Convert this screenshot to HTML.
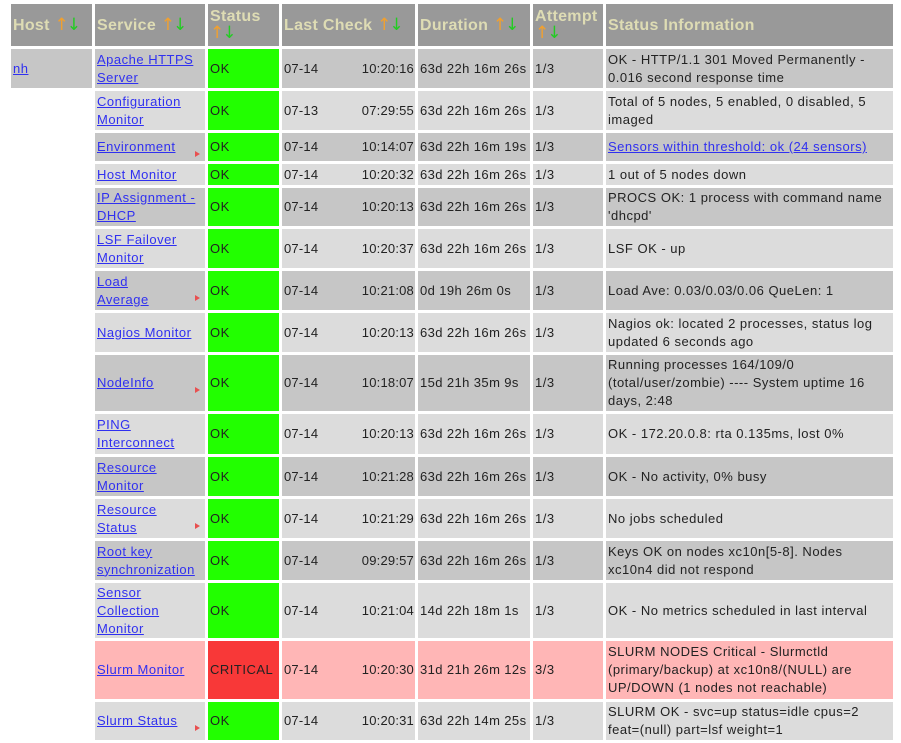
<!DOCTYPE html>
<html><head><meta charset="utf-8"><style>
html,body{margin:0;padding:0;background:#fff;width:901px;height:743px;overflow:hidden;}
table{position:absolute;left:8px;top:1px;border-collapse:separate;border-spacing:3px;table-layout:fixed;font-family:"Liberation Sans",Arial,sans-serif;font-size:13px;color:#222;letter-spacing:0.5px;}
td,th{padding:0 1px 0 2px;vertical-align:middle;line-height:18px;overflow:hidden;}
th{background:#999;color:#dedcb4;font-size:16px;font-weight:bold;text-align:left;height:42px;white-space:nowrap;line-height:17px;letter-spacing:0.3px;}
.u,.d{font-family:"DejaVu Sans",sans-serif;font-size:17px;font-weight:normal;letter-spacing:-2px;}
.u{color:#f0a030;}.d{color:#22cc22;}
a{color:#3030f0;text-decoration:underline;}
.o td{background:#c6c6c6;}.e td{background:#dcdcdc;}
.p td{background:#ffb6b6;}
td.w{background:#fff !important;}
td.ok{background:#22ff00 !important;}
td.cr{background:#f83838 !important;}
td.s{position:relative;}
.f{position:absolute;right:5px;top:calc(50% + 4px);width:0;height:0;border-left:5px solid #e85050;border-top:3px solid transparent;border-bottom:3px solid transparent;}
.lc{white-space:nowrap;letter-spacing:0.2px;}
.lc span{float:right;}
.n{white-space:nowrap;letter-spacing:0.4px;}
</style></head><body>
<table>
<colgroup><col style="width:81px"><col style="width:110px"><col style="width:71px"><col style="width:133px"><col style="width:112px"><col style="width:70px"><col style="width:287px"></colgroup>
<tr><th>Host <span class="u">↑</span><span class="d">↓</span></th><th>Service <span class="u">↑</span><span class="d">↓</span></th><th>Status<br><span class="u">↑</span><span class="d">↓</span></th><th>Last Check <span class="u">↑</span><span class="d">↓</span></th><th>Duration <span class="u">↑</span><span class="d">↓</span></th><th>Attempt<br><span class="u">↑</span><span class="d">↓</span></th><th>Status Information</th></tr>
<tr class="o" style="height:39px"><td><a>nh</a></td><td class="s"><a>Apache HTTPS Server</a></td><td class="ok">OK</td><td class="lc">07-14<span>10:20:16</span></td><td class="n">63d 22h 16m 26s</td><td>1/3</td><td>OK - HTTP/1.1 301 Moved Permanently - 0.016 second response time</td></tr>
<tr class="e" style="height:39px"><td class="w"></td><td class="s"><a>Configuration Monitor</a></td><td class="ok">OK</td><td class="lc">07-13<span>07:29:55</span></td><td class="n">63d 22h 16m 26s</td><td>1/3</td><td>Total of 5 nodes, 5 enabled, 0 disabled, 5 imaged</td></tr>
<tr class="o" style="height:28px"><td class="w"></td><td class="s"><a>Environment</a><i class="f"></i></td><td class="ok">OK</td><td class="lc">07-14<span>10:14:07</span></td><td class="n">63d 22h 16m 19s</td><td>1/3</td><td><a>Sensors within threshold: ok (24 sensors)</a></td></tr>
<tr class="e" style="height:21px"><td class="w"></td><td class="s"><a>Host Monitor</a></td><td class="ok">OK</td><td class="lc">07-14<span>10:20:32</span></td><td class="n">63d 22h 16m 26s</td><td>1/3</td><td>1 out of 5 nodes down</td></tr>
<tr class="o" style="height:38px"><td class="w"></td><td class="s"><a>IP Assignment - DHCP</a></td><td class="ok">OK</td><td class="lc">07-14<span>10:20:13</span></td><td class="n">63d 22h 16m 26s</td><td>1/3</td><td>PROCS OK: 1 process with command name 'dhcpd'</td></tr>
<tr class="e" style="height:39px"><td class="w"></td><td class="s"><a>LSF Failover Monitor</a></td><td class="ok">OK</td><td class="lc">07-14<span>10:20:37</span></td><td class="n">63d 22h 16m 26s</td><td>1/3</td><td>LSF OK - up</td></tr>
<tr class="o" style="height:39px"><td class="w"></td><td class="s"><a>Load<br>Average</a><i class="f"></i></td><td class="ok">OK</td><td class="lc">07-14<span>10:21:08</span></td><td class="n">0d 19h 26m 0s</td><td>1/3</td><td>Load Ave: 0.03/0.03/0.06 QueLen: 1</td></tr>
<tr class="e" style="height:39px"><td class="w"></td><td class="s"><a>Nagios Monitor</a></td><td class="ok">OK</td><td class="lc">07-14<span>10:20:13</span></td><td class="n">63d 22h 16m 26s</td><td>1/3</td><td>Nagios ok: located 2 processes, status log updated 6 seconds ago</td></tr>
<tr class="o" style="height:56px"><td class="w"></td><td class="s"><a>NodeInfo</a><i class="f"></i></td><td class="ok">OK</td><td class="lc">07-14<span>10:18:07</span></td><td class="n">15d 21h 35m 9s</td><td>1/3</td><td>Running processes 164/109/0 (total/user/zombie) ---- System uptime 16 days, 2:48</td></tr>
<tr class="e" style="height:40px"><td class="w"></td><td class="s"><a>PING<br>Interconnect</a></td><td class="ok">OK</td><td class="lc">07-14<span>10:20:13</span></td><td class="n">63d 22h 16m 26s</td><td>1/3</td><td>OK - 172.20.0.8: rta 0.135ms, lost 0%</td></tr>
<tr class="o" style="height:39px"><td class="w"></td><td class="s"><a>Resource<br>Monitor</a></td><td class="ok">OK</td><td class="lc">07-14<span>10:21:28</span></td><td class="n">63d 22h 16m 26s</td><td>1/3</td><td>OK - No activity, 0% busy</td></tr>
<tr class="e" style="height:39px"><td class="w"></td><td class="s"><a>Resource<br>Status</a><i class="f"></i></td><td class="ok">OK</td><td class="lc">07-14<span>10:21:29</span></td><td class="n">63d 22h 16m 26s</td><td>1/3</td><td>No jobs scheduled</td></tr>
<tr class="o" style="height:39px"><td class="w"></td><td class="s"><a>Root key<br>synchronization</a></td><td class="ok">OK</td><td class="lc">07-14<span>09:29:57</span></td><td class="n">63d 22h 16m 26s</td><td>1/3</td><td>Keys OK on nodes xc10n[5-8]. Nodes<br>xc10n4 did not respond</td></tr>
<tr class="e" style="height:55px"><td class="w"></td><td class="s"><a>Sensor<br>Collection<br>Monitor</a></td><td class="ok">OK</td><td class="lc">07-14<span>10:21:04</span></td><td class="n">14d 22h 18m 1s</td><td>1/3</td><td>OK - No metrics scheduled in last interval</td></tr>
<tr class="p" style="height:58px"><td class="w"></td><td class="s"><a>Slurm Monitor</a></td><td class="cr">CRITICAL</td><td class="lc">07-14<span>10:20:30</span></td><td class="n">31d 21h 26m 12s</td><td>3/3</td><td>SLURM NODES Critical - Slurmctld (primary/backup) at xc10n8/(NULL) are UP/DOWN (1 nodes not reachable)</td></tr>
<tr class="e" style="height:38px"><td class="w"></td><td class="s"><a>Slurm Status</a><i class="f"></i></td><td class="ok">OK</td><td class="lc">07-14<span>10:20:31</span></td><td class="n">63d 22h 14m 25s</td><td>1/3</td><td>SLURM OK - svc=up status=idle cpus=2 feat=(null) part=lsf weight=1</td></tr>
</table>
</body></html>
